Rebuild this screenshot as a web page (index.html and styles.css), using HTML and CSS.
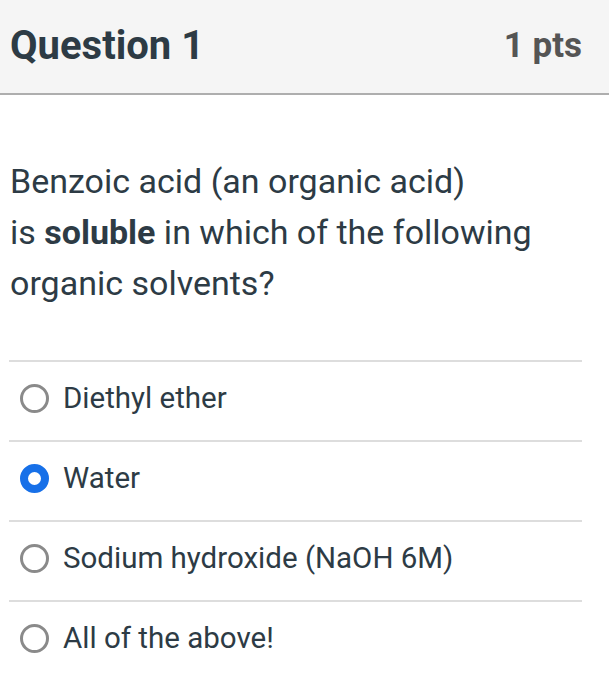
FILE: index.html
```html
<!DOCTYPE html>
<html>
<head>
<meta charset="utf-8">
<link rel="stylesheet" href="styles.css">
</head>
<body>
<div class="question">
  <div class="header">
    <span class="title">Question 1</span>
    <span class="pts">1 pts</span>
  </div>
  <div class="text">Benzoic acid (an organic acid)<br>is <b>soluble</b> in which of the following<br>organic solvents?</div>
  <div class="answers">
    <div class="answer"><span class="radio"></span><span class="label">Diethyl ether</span></div>
    <div class="answer"><span class="radio checked"></span><span class="label">Water</span></div>
    <div class="answer"><span class="radio"></span><span class="label">Sodium hydroxide (NaOH 6M)</span></div>
    <div class="answer"><span class="radio"></span><span class="label">All of the above!</span></div>
  </div>
</div>
</body>
</html>
```
FILE: styles.css
```css
html, body {
  margin: 0;
  padding: 0;
  background: #ffffff;
}
body {
  font-family: Roboto, "Liberation Sans", sans-serif;
  color: #2d3b45;
}
.header {
  box-sizing: border-box;
  height: 95px;
  background: #f5f5f5;
  border-bottom: 2px solid #aeaeae;
  display: flex;
  justify-content: space-between;
  align-items: center;
  padding: 0 27px 2px 10px;
}
.title {
  font-size: 40px;
  font-weight: 700;
  color: #2d3b45;
}
.pts {
  font-size: 35px;
  font-weight: 700;
  color: #555555;
}
.text {
  font-size: 34px;
  line-height: 51px;
  padding: 0 10px;
  margin-top: 61px;
}
.text b {
  font-weight: 700;
}
.answers {
  margin: 51px 27px 0 9px;
}
.answer {
  height: 80px;
  box-sizing: border-box;
  border-top: 2px solid #dddddd;
  display: flex;
  align-items: center;
  padding: 0 0 6px 11px;
}
.radio {
  width: 29px;
  height: 29px;
  box-sizing: border-box;
  border: 3px solid #8a8a8a;
  border-radius: 50%;
  flex: none;
  margin-right: 14px;
}
.radio.checked {
  border: 8px solid #1770e8;
  background: #ffffff;
}
.label {
  font-size: 29.5px;
  color: #2d3b45;
}
```
